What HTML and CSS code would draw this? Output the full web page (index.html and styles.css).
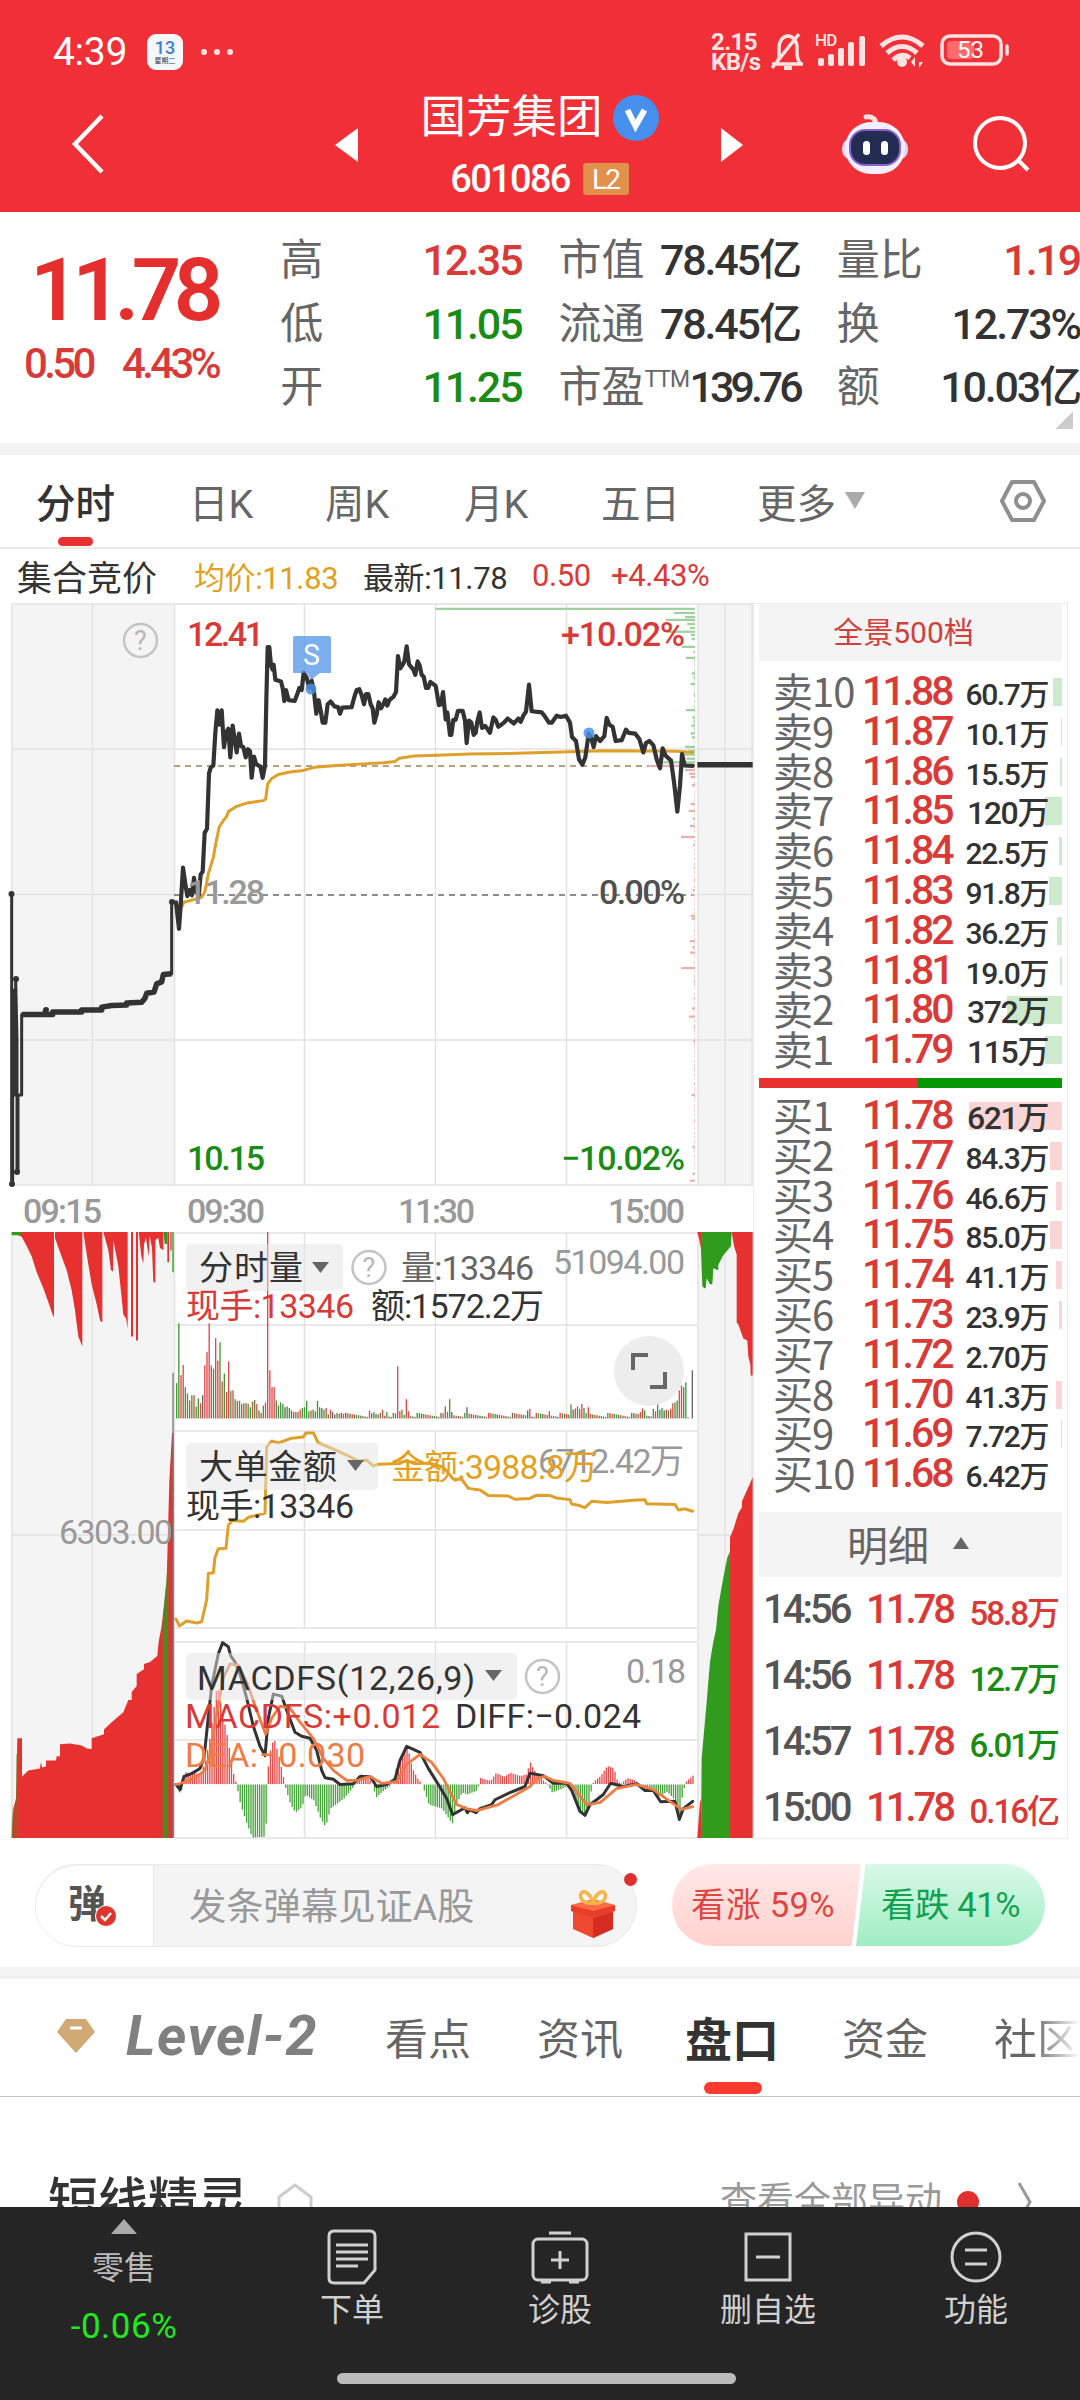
FILE: index.html
```html
<!DOCTYPE html>
<html lang="zh-CN">
<head>
  <meta charset="UTF-8" />
  <meta name="viewport" content="width=device-width, initial-scale=1.0"/>
  <title>国芳集团 601086</title>
  <link rel="stylesheet" href="styles.css">
</head>
<body>
  <header class="top">
    <div class="status">
      <span class="clock">4:39</span>
      <span class="cal"><b>13</b><i>星期二</i></span>
      <span class="dots"><i></i><i></i><i></i></span>
      <span class="speed">2.15<br>KB/s</span>
      <svg class="status-icons" width="302" height="44" viewBox="768 32 302 44" fill="none" stroke="#ffe3e3" stroke-width="3.5">
        <path d="M772 66h31M777 65c3-5 2-10 2-15 0-7 4-12 9-12s9 5 9 12c0 5-1 10 3 15M772 70L799 36"/>
        <path d="M784 70h8" stroke-width="4"/>
        <g fill="#ffe3e3" stroke="none">
          <text x="815" y="48" font-size="17" font-weight="700" class="num">HD</text>
          <rect x="818" y="60" width="6" height="8" rx="2"/><rect x="828" y="56" width="6" height="12" rx="2"/>
          <rect x="838" y="50" width="6" height="18" rx="2"/><rect x="848" y="44" width="6" height="24" rx="2"/>
          <rect x="859" y="38" width="6" height="30" rx="2"/>
          <circle cx="902" cy="64" r="5"/><path d="M911 64l4-5v10zM919 70l4-6h-4z"/>
        </g>
        <path d="M881 48q21-18 42 0M887 55q15-13 30 0M893 62q9-8 17 -2" stroke-width="5"/>
        <rect x="942" y="38" width="59" height="28" rx="8"/>
        <rect x="947" y="43" width="27" height="18" rx="4" fill="#ff6a6a" stroke="none"/>
        <path d="M1007 48v8" stroke-linecap="round"/>
        <text x="957" y="60" font-size="24" fill="#fff" stroke="none" class="level">53</text>
      </svg>
    </div>
    <div class="titlebar">
      <svg class="back" width="36" height="62" viewBox="0 0 36 62"><path d="M32 3L5 31l27 28" fill="none" stroke="#fff" stroke-width="4.5"/></svg>
      <span class="tri-left"></span>
      <div class="name">
        <div class="stock">国芳集团<svg width="46" height="46" viewBox="0 0 46 46"><circle cx="23" cy="23" r="23" fill="#468fec"/><path d="M14.500 15l8 16 9-16" fill="none" stroke="#fff" stroke-width="6"/></svg></div>
        <div class="code num">601086<em>L2</em></div>
      </div>
      <span class="tri-right"></span>
      <svg class="robot" width="68" height="64" viewBox="0 0 68 64">
        <path d="M34 14c2-6-2-10-9-9" fill="none" stroke="#ffdede" stroke-width="5" stroke-linecap="round"/>
        <rect x="1" y="26" width="66" height="22" rx="10" fill="#ddd5fb"/>
        <rect x="4" y="10" width="60" height="52" rx="26" fill="#f2efff"/>
        <rect x="9" y="18" width="50" height="35" rx="15" fill="#232c52" stroke="#8a5fd0" stroke-width="2"/>
        <rect x="22" y="29" width="7" height="14" rx="3.500" fill="#fff"/><rect x="40" y="29" width="7" height="14" rx="3.500" fill="#fff"/>
      </svg>
      <svg class="search" width="58" height="58" viewBox="0 0 58 58" fill="none" stroke="#fff" stroke-width="4"><circle cx="27" cy="28" r="25"/><path d="M45 45l10 10"/></svg>
    </div>
  </header>

  <section class="quote">
    <div class="last num">
      <div class="price">11.78</div>
      <div class="change"><span>0.50</span><span>4.43%</span></div>
    </div>
    <dl>
      <div><dt>高</dt><dd class="num red">12.35</dd></div>
      <div><dt>低</dt><dd class="num green">11.05</dd></div>
      <div><dt>开</dt><dd class="num green">11.25</dd></div>
    </dl>
    <dl>
      <div><dt>市值</dt><dd class="num">78.45亿</dd></div>
      <div><dt>流通</dt><dd class="num">78.45亿</dd></div>
      <div><dt>市盈<sup>TTM</sup></dt><dd class="num pe">139.76</dd></div>
    </dl>
    <dl>
      <div><dt>量比</dt><dd class="num red">1.19</dd></div>
      <div><dt>换</dt><dd class="num">12.73%</dd></div>
      <div><dt>额</dt><dd class="num">10.03亿</dd></div>
    </dl>
    <span class="corner"></span>
  </section>

  <nav class="periods">
    <span class="active">分时</span><span>日K</span><span>周K</span><span>月K</span><span>五日</span><span class="more">更多</span>
    <svg width="46" height="44" viewBox="0 0 46 44" fill="none" stroke="#8f8f8f" stroke-width="4"><path d="M12 3h22l10 19-10 19H12L2 22z" stroke-linejoin="round"/><circle cx="23" cy="22" r="7"/></svg>
  </nav>

  <div class="summary">
    <span class="auction">集合竞价</span>
    <span class="avg">均价:11.83</span>
    <span>最新:11.78</span>
    <span class="red">0.50</span>
    <span class="red">+4.43%</span>
  </div>

  <main class="market">
    <svg class="chart" width="753" height="1240" viewBox="0 600 753 1240">
      <!-- auction backgrounds -->
      <path d="M11 604h163v581H11zM11 1232h163v606H11zM698 604h55v581h-55zM698 1232h55v606h-55z" fill="#f4f4f4"/>
      <!-- grid -->
      <g class="grid">
        <path d="M11 604h742M11 749h742M11 894.500h163M698 894.500h55M11 1040h742M11 1185h742"/>
        <path d="M12 604v581M92.500 604v581M174.500 604v581M304.500 604v581M435.500 604v581M566.500 604v581M698 604v581M725 604v581M752 604v581"/>
        <path d="M174 1233h524M174 1325h524M174 1431h524M174 1530h524M174 1628h524M174 1642h524M174 1740h524M174 1838h524M11 1535h163M698 1535h55"/>
        <path d="M12 1232v606M92.500 1232v606M174.500 1232v606M304.500 1233v185M304.500 1431v197M304.500 1642v196M435.500 1233v185M435.500 1431v197M435.500 1642v196M566.500 1233v185M566.500 1431v197M566.500 1642v196M698 1232v606M725 1232v606M752 1232v606"/>
      </g>
      <path d="M174 766h521" stroke="#b8a27c" stroke-width="1.800" stroke-dasharray="6 5"/>
      <path d="M174 895h521" stroke="#8c8c8c" stroke-width="1.800" stroke-dasharray="6 5"/>

      <g transform="translate(370 590) scale(.33333 .40816)" id="depth"></g>

      <!-- price and average -->
      <g transform="translate(0 590) scale(.33333 .40816)" class="lines">
        <polyline class="avg-line" points="528,770 543,780 552,765 605,753 615,738 625,695 640,655 650,610 658,580 670,565 680,555 685,543 710,530 740,522 790,516 797,512 803,475 815,462 835,452 870,446 910,442 945,434 1010,430 1090,426 1150,423 1185,420 1198,412 1240,407 1310,405 1410,402 1550,400 1710,396 1810,394 2030,395 2078,398"/>
        <polyline class="price-line" points="528,765 537,830 543,760 549,680 556,720 562,750 570,735 576,748 582,705 588,740 596,748 602,697 608,690 614,595 621,585 627,450 632,435 640,430 646,350 652,295 658,330 665,295 672,385 678,350 685,340 691,410 698,332 710,398 717,352 723,382 730,385 737,410 744,390 750,395 755,460 762,408 768,425 775,430 781,432 788,460 795,430 799,270 803,140 808,140 813,185 818,195 821,183 826,220 843,224 848,240 853,272 858,245 866,270 884,272 892,255 898,240 905,245 911,203 920,215 928,240 935,222 942,250 949,303 956,270 963,300 968,325 976,325 983,280 992,273 1003,285 1014,287 1020,303 1027,288 1055,287 1062,265 1070,245 1078,243 1085,258 1092,280 1098,255 1105,255 1112,280 1118,290 1123,325 1130,305 1136,275 1143,290 1150,280 1156,268 1162,283 1168,270 1180,262 1188,250 1194,162 1201,192 1208,183 1213,175 1220,138 1227,182 1240,195 1246,208 1253,175 1259,185 1265,208 1271,212 1278,240 1285,240 1291,225 1307,235 1317,282 1323,280 1329,250 1337,317 1342,300 1350,355 1354,355 1360,318 1367,318 1374,296 1388,296 1395,320 1400,375 1407,320 1414,325 1421,355 1427,350 1432,322 1439,300 1446,338 1455,333 1462,340 1470,350 1480,312 1487,318 1495,335 1504,330 1512,325 1523,315 1542,327 1555,315 1562,323 1570,308 1578,298 1587,232 1595,297 1625,300 1635,310 1647,325 1655,325 1670,308 1682,311 1698,308 1710,325 1716,360 1728,370 1737,415 1747,428 1756,410 1766,352 1773,360 1781,385 1788,358 1800,370 1813,358 1820,313 1828,330 1838,335 1847,370 1865,368 1878,342 1886,350 1906,352 1918,365 1930,398 1938,375 1948,370 1960,380 1970,415 1980,437 1988,388 1996,405 2013,418 2022,470 2032,543 2040,480 2046,402 2054,430 2078,431"/>
        <polyline class="price-line thin" points="35,745 35,1455 38,1455 38,1237 42,1237 42,980 45,980 45,1237 47,1237 47,953 51,1100 51,1425 54,1425 54,1237 65,1237 65,1040"/>
        <polyline class="price-line thick" points="65,1040 158,1040 158,1034 245,1034 245,1029 305,1029 305,1022 335,1018 380,1017 380,1012 425,1010 435,1000 440,988 462,985 470,965 485,960 490,942 515,940"/>
        <polyline class="price-line thin" points="515,940 515,765"/>
        <path class="price-line thick" d="M2092 428h166M136 1034v-5"/>
      </g>
      <g fill="#333"><circle cx="11.500" cy="894" r="3"/><circle cx="12" cy="1184" r="3"/><circle cx="16" cy="979" r="3"/><circle cx="172" cy="902" r="3"/><circle cx="17" cy="1172" r="3"/><circle cx="46" cy="1010" r="3"/></g>
      <path d="M293 638q0-2 2-2h34q2 0 2 2v35h-11l-9 7-4-7h-14z" fill="#4a90e8" opacity=".72"/>
      <circle cx="311" cy="689" r="5.500" fill="#4a90e2" opacity=".85"/><circle cx="589" cy="733" r="5.500" fill="#4a90e2" opacity=".85"/>
      <text x="303" y="664.500" font-size="30" fill="#fff" textLength="17" lengthAdjust="spacingAndGlyphs">S</text>

      <g class="help"><circle cx="140.500" cy="640.500" r="16.500"/><text x="140.500" y="650">?</text></g>
      <g class="axis">
        <text x="187" y="645.500" textLength="77" fill="#d93a38">12.41</text>
        <text x="187" y="1169.500" textLength="78" fill="#1a8c14">10.15</text>
        <text x="187" y="903.500" textLength="78">11.28</text>
        <text x="561" y="645.500" textLength="124" fill="#d93a38">+10.02%</text>
        <text x="561" y="1169.500" textLength="124" fill="#1a8c14">−10.02%</text>
        <text x="599" y="903.500" textLength="86" fill="#505050">0.00%</text>
        <text x="23" y="1222.500" textLength="79">09:15</text>
        <text x="187" y="1222.500" textLength="78">09:30</text>
        <text x="398" y="1222.500" textLength="77">11:30</text>
        <text x="608" y="1222.500" textLength="77">15:00</text>
      </g>

      <!-- lower indicators -->
      <g transform="translate(0 1220) scale(.33333 .40177)">
        <g fill="#e73030">
          <path d="M35 30L65 42 80 65 95 90 110 130 130 170 145 205 160 240 162 240V30zM165 30V45L180 80 200 125 215 175 225 225 235 290 247 315V30zM250 30L262 95 275 160 290 210 300 250 307 255V30zM310 30L325 75 333 125 339 128 340 50 355 115 362 170 370 235 378 245 383 270V30z"/>
          <path d="M393 30h6v260h-6zM408 30h6v270h-6zM416 30L424 90 430 108 432 60 438 45 446 90 449 40 456 70 460 155 466 155V50L475 45 480 70 490 75V30zM502 30h5v75h-5zM511 30h4v45h-4z"/>
          <path d="M35 1538L40 1465 48 1440 52 1290H66V1385L85 1370 120 1365 122 1350 127 1363 138 1360V1345H168L170 1335 180 1335V1305L210 1303 245 1308 262 1316 275 1316V1290L312 1280 312 1268 335 1250 370 1225 385 1195 395 1195V1175L410 1160 410 1130 432 1118 432 1105 450 1100 472 1085 476 1050 485 1010 500 900 508 650 516 530 521 530V1538z"/>
          <path transform="translate(1110 0)" d="M982 30h12V75L988 50zM1085 30H1148V387H1142L1141 360 1135 340 1132 300 1120 295 1105 260 1100 255V85L1092 65zM1080 790L1090 770 1105 730 1116 715 1116 700 1135 665 1148 640V1538H1080zM982 1538L990 1450 994 1440V1538z"/>
        </g>
        <g fill="#319b1d">
          <path d="M35 30h30l-5 8H35zM490 30h12v30h-8zM517 30h4v100h-4z"/>
          <path transform="translate(1110 0)" d="M993 30H1085L1083 65 1060 88 1045 112 1045 125 1030 120 1027 160 1020 160 1010 145 1007 170 1003 170 997 165 993 75zM993 1538L995 1340 1010 1200 1020 1100 1030 1050 1038 1020 1045 960 1060 890 1072 840 1080 825V1538z"/>
          <path d="M35 1538V1510L39 1450V1538zM49 1538V1330h4V1538z" opacity=".6"/>
          <path d="M488 1538V1000L505 840V1538z" opacity=".8"/>
        </g>
        <path d="M519 380V1538" stroke="#777" stroke-width="4"/>
        <g id="volume"></g>
        <g id="macd"></g>
      </g>
      <g transform="translate(0 1220) scale(.33333 .40177)" class="lines">
        <polyline class="avg-line" points="528,993 538,1010 548,1005 560,998 590,1003 605,1000 620,945 625,880 640,878 645,840 655,818 678,817 685,760 697,748 730,750 745,740 795,730 800,565 815,550 835,555 875,543 910,540 918,530 940,530 955,555 1000,570 1040,585 1075,600 1100,598 1120,612 1135,608 1200,606 1220,598 1245,607 1290,605 1330,615 1360,645 1385,645 1405,668 1440,672 1465,686 1525,687 1545,695 1590,693 1610,685 1650,686 1670,692 1710,696 1715,707 1735,710 1755,716 1775,700 1820,703 1910,697 1935,696 1940,706 2025,708 2035,722 2055,719 2078,725"/>
        <polyline class="price-line macd-line" points="528,1405 540,1418 552,1385 575,1378 600,1365 612,1340 622,1260 635,1160 655,1080 668,1052 685,1062 692,1085 705,1100 720,1130 740,1190 760,1260 780,1310 795,1333 805,1240 820,1180 845,1185 860,1220 885,1275 905,1285 930,1290 950,1320 965,1370 975,1388 1000,1392 1020,1405 1060,1403 1080,1385 1110,1385 1130,1410 1160,1405 1185,1392 1200,1345 1220,1310 1260,1325 1285,1365 1315,1405 1340,1440 1358,1480 1395,1463 1402,1475 1410,1468 1428,1475 1440,1465 1475,1455 1485,1443 1530,1425 1575,1410 1590,1377 1630,1383 1660,1402 1700,1402 1715,1420 1740,1472 1755,1482 1770,1455 1790,1443 1810,1430 1832,1402 1870,1410 1910,1403 1935,1420 1960,1420 1982,1448 2025,1447 2038,1492 2050,1465 2078,1447"/>
        <polyline class="dea-line" points="528,1405 560,1398 590,1385 615,1370 630,1330 650,1230 670,1140 690,1105 715,1108 740,1150 770,1220 797,1280 815,1240 840,1210 870,1215 900,1250 940,1290 970,1340 1000,1370 1040,1395 1070,1395 1110,1385 1145,1402 1190,1398 1220,1355 1260,1330 1295,1350 1330,1390 1370,1455 1400,1465 1430,1470 1495,1455 1590,1410 1610,1390 1635,1385 1660,1395 1710,1402 1760,1455 1800,1450 1850,1415 1910,1405 1960,1418 2015,1450 2045,1467 2078,1460"/>
      </g>
      <g fill="#e4e4e4" opacity=".5">
        <rect x="186" y="1244" width="157" height="47" rx="5"/><rect x="186" y="1443" width="192" height="47" rx="5"/><rect x="186" y="1653" width="331" height="47" rx="5"/>
      </g>
      <g fill="#666"><path d="M312 1262h17l-8.500 11zM347 1460h17l-8.500 11zM485 1670h17l-8.500 11z"/></g>
      <g class="help"><circle cx="369" cy="1267.500" r="16.500"/><text x="369" y="1277">?</text><circle cx="542.500" cy="1676.500" r="16.500"/><text x="542.500" y="1686">?</text></g>
      <circle cx="649" cy="1371" r="35" fill="#ebebeb" opacity=".92"/>
      <path d="M633 1370v-15h15M650 1387h15v-15" fill="none" stroke="#666" stroke-width="4"/>
      <g class="axis dark">
        <text x="199" y="1280" textLength="104">分时量</text>
        <text x="401" y="1279.500" textLength="133" fill="#666">量:13346</text>
        <text x="553" y="1273.500" textLength="132" fill="#999">51094.00</text>
        <text x="186" y="1318" textLength="168" fill="#d93a38">现手:13346</text>
        <text x="371" y="1318" textLength="173">额:1572.2万</text>
        <text x="199" y="1479" textLength="138">大单金额</text>
        <text x="538" y="1473" textLength="146" fill="#999">6712.42万</text>
        <text x="391" y="1478.500" textLength="207" fill="#e3a11f">金额:3988.8万</text>
        <text x="186" y="1518" textLength="168">现手:13346</text>
        <text x="59" y="1543.500" textLength="114" fill="#999">6303.00</text>
        <text x="197" y="1689.500" textLength="278">MACDFS(12,26,9)</text>
        <text x="626" y="1683" textLength="60" fill="#999">0.18</text>
        <text x="185" y="1727.500" textLength="255" fill="#d93a38">MACDFS:+0.012</text>
        <text x="455" y="1727.500" textLength="186">DIFF:−0.024</text>
        <text x="185" y="1766.500" textLength="180" fill="#f07b45">DEA:−0.030</text>
      </g>
    </svg>

    <aside class="book">
      <div class="panorama">全景500档</div>
      <div class="levels" id="asks"></div>
      <div class="ratio"><i></i><b></b></div>
      <div class="levels" id="bids"></div>
      <div class="detail-head">明细<i></i></div>
      <div class="ticks num">
        <div><span>14:56</span><b>11.78</b><em class="red">58.8万</em></div>
        <div><span>14:56</span><b>11.78</b><em class="green">12.7万</em></div>
        <div><span>14:57</span><b>11.78</b><em class="green">6.01万</em></div>
        <div><span>15:00</span><b>11.78</b><em class="red">0.16亿</em></div>
      </div>
    </aside>
  </main>

  <section class="danmu">
    <div class="input">
      <span class="toggle">弹<svg width="22" height="22" viewBox="0 0 22 22"><circle cx="11" cy="11" r="10.500" fill="#e0352f" stroke="#fff"/><path d="M6 11l4 4 6-7" fill="none" stroke="#fff" stroke-width="2.500"/></svg></span>
      <span class="hint">发条弹幕见证A股</span>
      <svg class="gift" width="46" height="50" viewBox="0 0 46 50">
        <path d="M3 20l20-6 20 6v20L23 49 3 40z" fill="#ee4a2f"/>
        <path d="M23 27l20-5v18L23 49z" fill="#d52b20"/>
        <path d="M1 16l22-6 22 6v6l-22 7-22-7z" fill="#ff6a48"/><path d="M1 16l22 6 22-6v6l-22 7-22-7z" fill="#e83d2b"/>
        <path d="M23 14C8 16 8 1 15 3c6 2 8 11 8 11s2-9 8-11c7-2 7 13-8 11z" fill="none" stroke="#f7b548" stroke-width="3.500"/>
      </svg>
      <i class="dot"></i>
    </div>
    <div class="vote"><span class="up">看涨 59%</span><span class="down">看跌 41%</span></div>
  </section>

  <nav class="sections">
    <svg width="38" height="36" viewBox="0 0 38 36"><path d="M9 1h20l9 13-19 21L0 14z" fill="#d0a975"/><path d="M13 10h12" stroke="#fff" stroke-width="3"/></svg>
    <span class="level2">Level-2</span><span>看点</span><span>资讯</span><span class="active">盘口</span><span>资金</span><span>社区</span>
  </nav>

  <section class="elf">
    <h2>短线精灵</h2>
    <svg width="36" height="36" viewBox="0 0 36 36"><path d="M2 16L18 4l16 12v14H2z" fill="none" stroke="#ccc" stroke-width="3"/></svg>
    <span class="all">查看全部异动</span><i class="dot"></i>
    <svg class="go" width="16" height="42" viewBox="0 0 16 42"><path d="M2 2l11 19L2 40" fill="none" stroke="#999" stroke-width="3"/></svg>
  </section>

  <footer>
    <div class="actions">
      <div class="sector"><i></i><span>零售</span><b>-0.06%</b></div>
      <div><svg width="60" height="56" viewBox="0 0 60 56"><path d="M12 2h36q5 0 5 5v34L42 54H12q-5 0-5-5V7q0-5 5-5zM14 16h32M14 23h32M14 30h32M14 37h22"/></svg>下单</div>
      <div><svg width="60" height="56" viewBox="0 0 60 56"><rect x="3" y="10" width="54" height="41" rx="5"/><path d="M19 4h22M30 22v18M21 31h18M11 53h10M39 53h10"/></svg>诊股</div>
      <div><svg width="60" height="56" viewBox="0 0 60 56"><rect x="8" y="5" width="44" height="46"/><path d="M18 28h24"/></svg>删自选</div>
      <div><svg width="60" height="56" viewBox="0 0 60 56"><circle cx="30" cy="28" r="24"/><path d="M19 21h22M19 35h22"/></svg>功能</div>
    </div>
    <div class="home"></div>
  </footer>

  <script>
    // [label, price, volume, bar width]
    const asks = [
      ["卖10", "11.88", "60.7万", 9], ["卖9", "11.87", "10.1万", 1], ["卖8", "11.86", "15.5万", 2],
      ["卖7", "11.85", "120万", 17], ["卖6", "11.84", "22.5万", 3], ["卖5", "11.83", "91.8万", 13],
      ["卖4", "11.82", "36.2万", 5], ["卖3", "11.81", "19.0万", 2], ["卖2", "11.80", "372万", 55],
      ["卖1", "11.79", "115万", 17]
    ];
    const bids = [
      ["买1", "11.78", "621万", 93], ["买2", "11.77", "84.3万", 12], ["买3", "11.76", "46.6万", 6],
      ["买4", "11.75", "85.0万", 12], ["买5", "11.74", "41.1万", 6], ["买6", "11.73", "23.9万", 3],
      ["买7", "11.72", "2.70万", 0], ["买8", "11.70", "41.3万", 6], ["买9", "11.69", "7.72万", 1],
      ["买10", "11.68", "6.42万", 0]
    ];

    function renderLevels(id, rows) {
      document.getElementById(id).innerHTML = rows.map(r =>
        `<div><span>${r[0]}</span><b class="num">${r[1]}</b><em class="num${r[2].length === 4 ? " big" : ""}">${r[2]}</em><i style="width:${r[3]}px"></i></div>`
      ).join("");
    }
    renderLevels("asks", asks);
    renderLevels("bids", bids);

    const RED = "#e0474a", GREEN = "#3f9a35", GRAY = "#666";
    const rect = (x, y, w, h, c) => `<rect x="${x}" y="${y}" width="${w}" height="${h}" fill="${c}"/>`;

    // Minute volume
    const first = [88,237,108,133,78,62,45,58,58,30,50,38,58,132,165,237,132,124,200,144,190,92,112,66,142,68,70,48,44,44,36,38,38,36,28,42,46,36,20,14,32,40,464,120,78,78,45,32,40,36,28,30,26,20,16,16,16,22,26,28,44,18,20,22,18,44,28,26,22,26,10,22,16,10,14,12,14,12];
    const colors = "ggrrggrgrggrkrrrrgrrgrgrrgrgrgrgrggrgrgrgrrrrrgkggkggkrgrrggggrggggkgrgrkkgrkr";
    const spikes = {89:20,91:16,94:14,95:22,97:16,102:130,103:18,104:22,106:48,107:18,124:30,125:16,126:48,127:16,134:28,162:20,163:24,172:18,182:35,183:22,184:25,185:30,186:24,187:36,188:26,190:28,214:16,215:25,216:20,220:24,221:18,222:44,223:22,224:26,225:20,226:22,227:20,228:24,229:38,230:40,231:45,232:70,233:82,234:78,235:90,236:3,237:0,238:120};
    let out = "";
    for (let i = 0; i < 239; i++) {
      const h = first[i] || (spikes[i] !== undefined ? spikes[i] : 4 + (i * 7919 % 11));
      let c = colors[i] || "grgkgrr"[i * 31 % 7];
      if ([102, 106, 190, 232, 233].includes(i)) c = "r";
      if ([222, 231, 235].includes(i)) c = "g";
      if (i === 238) c = "k";
      out += rect(528 + i * 6.5, 494 - h, 4, h, c === "r" ? RED : c === "g" ? GREEN : GRAY);
    }
    document.getElementById("volume").innerHTML = out;

    // MACD histogram, interpolated between the turning points
    const turns = [[528,0],[540,-28],[552,30],[600,25],[615,60],[627,110],[650,250],[665,180],[680,120],[700,20],[708,0],[720,-50],[740,-100],[755,-132],[790,-130],[798,-90],[800,5],[805,70],[820,115],[835,70],[848,20],[852,0],[870,-50],[885,-70],[905,-55],[915,-25],[940,-40],[960,-85],[975,-105],[990,-60],[1030,-35],[1065,0],[1080,25],[1100,20],[1115,0],[1127,-32],[1150,-15],[1175,0],[1190,50],[1210,80],[1222,90],[1235,40],[1250,15],[1265,0],[1285,-50],[1325,-60],[1355,-98],[1370,-45],[1385,-20],[1400,-25],[1430,-15],[1435,0],[1440,15],[1470,8],[1487,28],[1510,18],[1530,28],[1560,20],[1580,25],[1587,58],[1600,35],[1625,12],[1640,0],[1655,-20],[1690,-8],[1705,0],[1720,-35],[1750,-80],[1765,-50],[1775,0],[1785,10],[1800,20],[1820,45],[1840,40],[1850,10],[1860,0],[1880,15],[1900,10],[1920,0],[1945,-12],[1975,-30],[2000,-18],[2025,-40],[2035,-90],[2045,-30],[2055,5],[2078,22]];
    out = "";
    for (let x = 530, k = 0; x < 2078; x += 6.5) {
      while (turns[k + 1][0] < x) k++;
      const [x0, v0] = turns[k], [x1, v1] = turns[k + 1];
      const v = v0 + (v1 - v0) * (x - x0) / (x1 - x0);
      out += v > 0 ? rect(x, 1404 - v, 4, v, "#ea4a4a") : rect(x, 1405, 4, -v, "#46a53a");
    }
    document.getElementById("macd").innerHTML = out;

    // Traded amount by price level, drawn from the right edge
    const levels = [[46,196],[56,912],[66,945],[73,888],[83,952],[93,960],[102,890],[110,962],[120,965],[139,935],[152,970],[166,948],[204,965],[214,970],[230,962],[258,971],[294,948],[312,967],[322,970],[332,964],[351,962],[361,965],[384,945],[394,955],[403,940],[413,950],[422,880],[431,835],[441,945],[450,957],[458,962],[478,966],[524,962],[541,956],[560,968],[578,960],[605,933],[625,970],[680,971],[710,971],[735,968],[747,966],[798,962],[805,965],[860,960],[875,967],[888,960],[926,933],[960,971],[1000,972],[1025,966],[1045,957],[1070,971],[1105,970],[1175,972],[1210,972],[1237,965],[1300,972],[1365,968],[1430,968],[1447,960]];
    out = levels.map(([y, x]) => rect(x, y - 2.5, 975 - x, 5.5, y < 428 ? "#9fd09f" : "#e9b0b0")).join("");
    for (let y = 150; y < 1420; y += 11) out += rect(973, y, 2, 4 + y * 7 % 5, y < 428 ? "#9fd09f" : "#e9b0b0");
    document.getElementById("depth").innerHTML = out;
  </script>
</body>
</html>
```

FILE: styles.css
```css
* { box-sizing: border-box; }
body {
  margin: 0;
  width: 1080px;
  height: 2400px;
  overflow: hidden;
  background: #fff;
  color: #333;
  font-family: Roboto, "Noto Sans CJK SC", sans-serif;
  display: flex;
  flex-direction: column;
}
i, em { font-style: normal; }
svg { display: block; flex: none; }
.num { font-family: Roboto, "Noto Sans CJK SC", sans-serif; letter-spacing: -0.05em; font-weight: 500; }
.red { color: #d93a38; }
.green { color: #1a8c14; }

/* header */
.top { height: 212px; background: #f12f37; color: #fff; flex: none; }
.status { height: 76px; padding: 28px 0 0 53px; display: flex; align-items: center; }
.clock { font-size: 39px; width: 94px; letter-spacing: -0.3px; }
.cal {
  width: 36px; height: 36px; border-radius: 9px;
  background: #f4f8fc; color: #3d7fd0;
  text-align: center;
  display: flex; flex-direction: column; justify-content: center;
}
.cal b { font-size: 18px; line-height: 18px; font-weight: 500; }
.cal i { font-size: 7px; line-height: 9px; color: #333; white-space: nowrap; }
.dots { display: flex; gap: 7px; margin-left: 18px; width: 510px; }
.dots i { width: 6px; height: 6px; border-radius: 50%; background: #ffe3e3; }
.speed { font-size: 24px; line-height: 20px; font-weight: 700; letter-spacing: -0.6px; width: 57px; color: #ffe3e3; }
.titlebar { height: 136px; display: flex; align-items: center; padding: 0 0 0 70px; }
.tri-left { margin: 2px 0 0 229px; border: 17px solid transparent; border-left: 0; border-right: 23px solid #fff; }
.tri-right { margin-top: 2px; border: 17px solid transparent; border-right: 0; border-left: 22px solid #fff; }
.name { width: 363px; display: flex; flex-direction: column; align-items: center; }
.stock { font-size: 45.5px; line-height: 60px; display: flex; align-items: center; gap: 10px; }
.stock svg { margin-top: 0; }
.code { font-size: 38px; line-height: 44px; display: flex; align-items: center; gap: 13px; margin-top: 9px; letter-spacing: -1.7px; }
.code em { background: #e2914d; border-radius: 3px; width: 46px; height: 32px; line-height: 33px; font-size: 28px; font-weight: 400; text-align: center; }
.robot { margin-left: 98px; }
.search { margin-left: 64px; }

/* quote */
.quote { height: 231px; padding-top: 17px; display: flex; position: relative; flex: none; }
.last { width: 281px; color: #e52f2e; }
.price { font-size: 87px; line-height: 86px; margin: 18px 0 0 30px; font-weight: 600; letter-spacing: -7.5px; }
.change { font-size: 42px; line-height: 50px; padding-left: 24px; display: flex; gap: 29px; margin-top: 6px; color: #d93a38; letter-spacing: -3.6px; }
.quote dl { margin: 0 37px 0 0; width: 242px; }
.quote dl:last-of-type { margin: 0; width: 244px; }
.quote dl div { height: 63.5px; display: flex; justify-content: space-between; align-items: center; white-space: nowrap; }
.quote dt { font-size: 43px; line-height: 63px; color: #666; }
.quote dt sup { font-size: 23px; line-height: 0; vertical-align: 15px; letter-spacing: -1px; }
.quote dd { margin: 0; font-size: 43px; line-height: 63px; }
.quote dd.pe { letter-spacing: -4px; }
.corner { position: absolute; right: 7px; bottom: 14px; width: 17px; height: 17px; background: linear-gradient(135deg, transparent 50%, #ccc 50%); }

/* period tabs */
.periods {
  height: 106px;
  border-top: 12px solid #f3f3f3;
  border-bottom: 2px solid #eaeaea;
  display: flex;
  align-items: center;
  padding: 0 0 2px 36px;
  font-size: 39.5px;
  color: #666;
  flex: none;
}
.periods span { width: 137px; position: relative; }
.periods span:nth-child(1) { width: 153px; color: #333; font-weight: 500; }
.periods span:nth-child(2) { width: 136px; }
.periods span:nth-child(3) { width: 139px; }
.periods span:nth-child(5) { width: 156px; }
.periods .active::after { content: ""; position: absolute; left: 22px; bottom: -17px; width: 35px; height: 9px; border-radius: 5px; background: #e93030; }
.periods .more { width: 243px; display: flex; align-items: center; gap: 9px; }
.periods svg { margin-top: 2px; }
.more::after { content: ""; border: 10px solid transparent; border-bottom: 0; border-top: 17px solid #aaa; }

.summary { height: 51px; display: flex; align-items: center; padding: 2px 0 0 17px; font-size: 31px; flex: none; white-space: nowrap; }
.summary span { width: 169px; letter-spacing: -0.4px; }
.summary .auction { font-size: 35px; width: 177px; letter-spacing: 0; }
.summary .avg { color: #dfa11e; }
.summary .red:nth-of-type(4) { width: 79px; }

/* chart */
.market { display: flex; height: 1240px; flex: none; }
.grid { fill: none; stroke: #e2e2e2; stroke-width: 1.5; }
.lines { fill: none; stroke-linejoin: round; stroke-linecap: round; }
.lines * { vector-effect: non-scaling-stroke; }
.price-line { stroke: #333; stroke-width: 4.2; }
.price-line.thin { stroke-width: 3; }
.price-line.thick { stroke-width: 5.5; stroke-linecap: butt; }
.price-line.macd-line { stroke-width: 3; }
.avg-line { stroke: #dfa02a; stroke-width: 3; }
.dea-line { stroke: #ee7b45; stroke-width: 2.8; }
.help circle { fill: none; stroke: #c4c4c4; stroke-width: 2.5; }
.help text { fill: #b8b8b8; font-size: 27px; text-anchor: middle; }
.axis { font-size: 34px; font-weight: 500; fill: #999; }
.axis.dark { fill: #333; font-weight: 400; }

/* order book */
.book { width: 315px; height: 1236px; margin-top: 3px; border: 1.5px solid #ececec; padding: 0 5px; }
.panorama { height: 57px; line-height: 57px; background: #f4f4f4; color: #d0403d; font-size: 30px; text-align: center; padding-right: 14px; }
.levels { padding-top: 11px; }
.levels div { height: 39.8px; line-height: 39.8px; display: flex; position: relative; align-items: center; padding: 0 14px 0 14px; white-space: nowrap; }
.levels span { width: 89px; font-size: 40px; color: #666; font-family: "Noto Sans CJK SC", sans-serif; letter-spacing: -1px; position: relative; top: -1px; }
.levels b { font-size: 41px; color: #d93a38; z-index: 1; letter-spacing: -3px; }
.levels em { margin-left: auto; font-size: 30px; z-index: 1; padding-top: 6px; letter-spacing: -1.4px; font-weight: 500; }
.levels em.big { font-size: 32px; }
.levels i { position: absolute; right: 0; top: 6px; height: 28px; background: #cdeacd; }
#bids { padding-top: 8px; }
#bids i { background: #f9d5d5; }
.ratio { display: flex; height: 10px; margin-top: 8px; }
.ratio i { width: 159px; background: #e73030; }
.ratio b { flex: 1; background: #059805; }
.detail-head { height: 65px; margin-top: 18px; background: #f4f4f4; font-size: 41px; color: #666; display: flex; align-items: center; padding: 0 0 2px 88px; gap: 24px; }
.detail-head i { border: 8px solid transparent; border-top: 0; border-bottom: 12px solid #666; }
.ticks div { display: flex; align-items: center; height: 66px; padding: 0 4px 0 4px; font-size: 40px; white-space: nowrap; letter-spacing: -3px; }
.ticks span { width: 103px; color: #555; }
.ticks b { font-weight: 500; color: #d93a38; }
.ticks em { margin-left: auto; font-size: 33px; padding-top: 2px; letter-spacing: -2px; }

/* danmu */
.danmu { height: 127px; padding: 24px 35px 0; display: flex; flex: none; justify-content: space-between; }
.input { width: 602px; height: 83px; border-radius: 42px; background: #f4f4f4; border: 1.5px solid #e9e9e9; display: flex; align-items: center; position: relative; }
.toggle { width: 118px; height: 80px; border-radius: 41px 0 0 41px; background: #fff; border-right: 1.5px solid #e9e9e9; font-size: 38px; font-weight: 700; color: #555; padding: 7px 0 0 32px; position: relative; }
.toggle svg { position: absolute; left: 59px; top: 39px; }
.hint { margin: -4px 0 0 35px; width: 381px; font-size: 37.3px; color: #999; }
.gift { margin-top: 16px; }
.dot { border-radius: 50%; background: #e0302d; }
.input .dot { position: absolute; right: -1px; top: 8px; width: 13px; height: 13px; }
.vote { width: 373px; height: 82px; display: flex; border-radius: 41px; overflow: hidden; font-size: 34.5px; line-height: 82px; letter-spacing: 0.4px; }
.up { width: 189px; padding-left: 19px; color: #dd4642; background: linear-gradient(#ffe9e8, #ffd2ce); clip-path: polygon(0 0, 100% 0, 95% 100%, 0 100%); white-space: nowrap; }
.down { width: 189px; margin-left: -5px; padding-left: 25px; color: #12a150; background: linear-gradient(#d9f9e8, #a0edc2); clip-path: polygon(5% 0, 100% 0, 100% 100%, 0 100%); white-space: nowrap; letter-spacing: -0.4px; }

/* section tabs */
.sections {
  height: 130px;
  border-top: 12px solid #f3f3f3;
  border-bottom: 1.5px solid #c4c4c4;
  display: flex;
  align-items: center;
  padding: 0 0 3px 57px;
  font-size: 43px;
  color: #666;
  white-space: nowrap;
  flex: none;
}
.sections span { margin-right: 66px; position: relative; }
.sections .level2 { margin: 0 65px 0 31px; width: 195px; font-size: 56px; line-height: 60px; font-weight: 700; font-style: italic; color: #808080; letter-spacing: 1.5px; }
.sections .active { font-size: 47px; font-weight: 700; color: #333; margin: 0 63px 0 -4px; }
.sections .active::after { content: ""; position: absolute; left: 19px; bottom: -23px; width: 58px; height: 12px; border-radius: 6px; background: #fb3b30; }
.sections span:last-child { margin: 0; -webkit-mask: linear-gradient(90deg, #000 45%, transparent); mask: linear-gradient(90deg, #000 45%, transparent); }

/* partly hidden under the footer */
.elf { height: 110px; padding: 70px 48px 0 48px; display: flex; align-items: flex-start; overflow: hidden; flex: none; }
.elf > * { flex: none; }
.elf h2 { margin: 0; font-size: 50px; line-height: 70px; font-weight: 500; }
.elf svg { margin: 14px 0 0 29px; }
.elf .all { margin-left: 407px; font-size: 37px; line-height: 70px; color: #999; }
.elf .dot { width: 22px; height: 22px; margin: 24px 0 0 15px; }
.elf .go { margin: 14px 0 0 38px; }

footer { height: 193px; background: #252525; color: #d0d0d0; flex: none; position: relative; }
.actions { height: 166px; display: flex; font-size: 32px; }
.actions div { width: 208px; display: flex; flex-direction: column; align-items: center; padding-top: 22px; line-height: 50px; }
.actions svg { fill: none; stroke: #d0d0d0; stroke-width: 3; }
.actions .sector { width: 248px; padding-top: 12px; }
.sector i { border: 13px solid transparent; border-top: 0; border-bottom: 15px solid #aaa; }
.sector span { margin-top: 9px; color: #bbb; }
.sector b { color: #1eea1e; font-size: 35px; font-weight: 400; margin-top: 9px; letter-spacing: 0.5px; }
.home { width: 399px; height: 11px; border-radius: 6px; background: #bbb; margin-left: 337px; }
```
